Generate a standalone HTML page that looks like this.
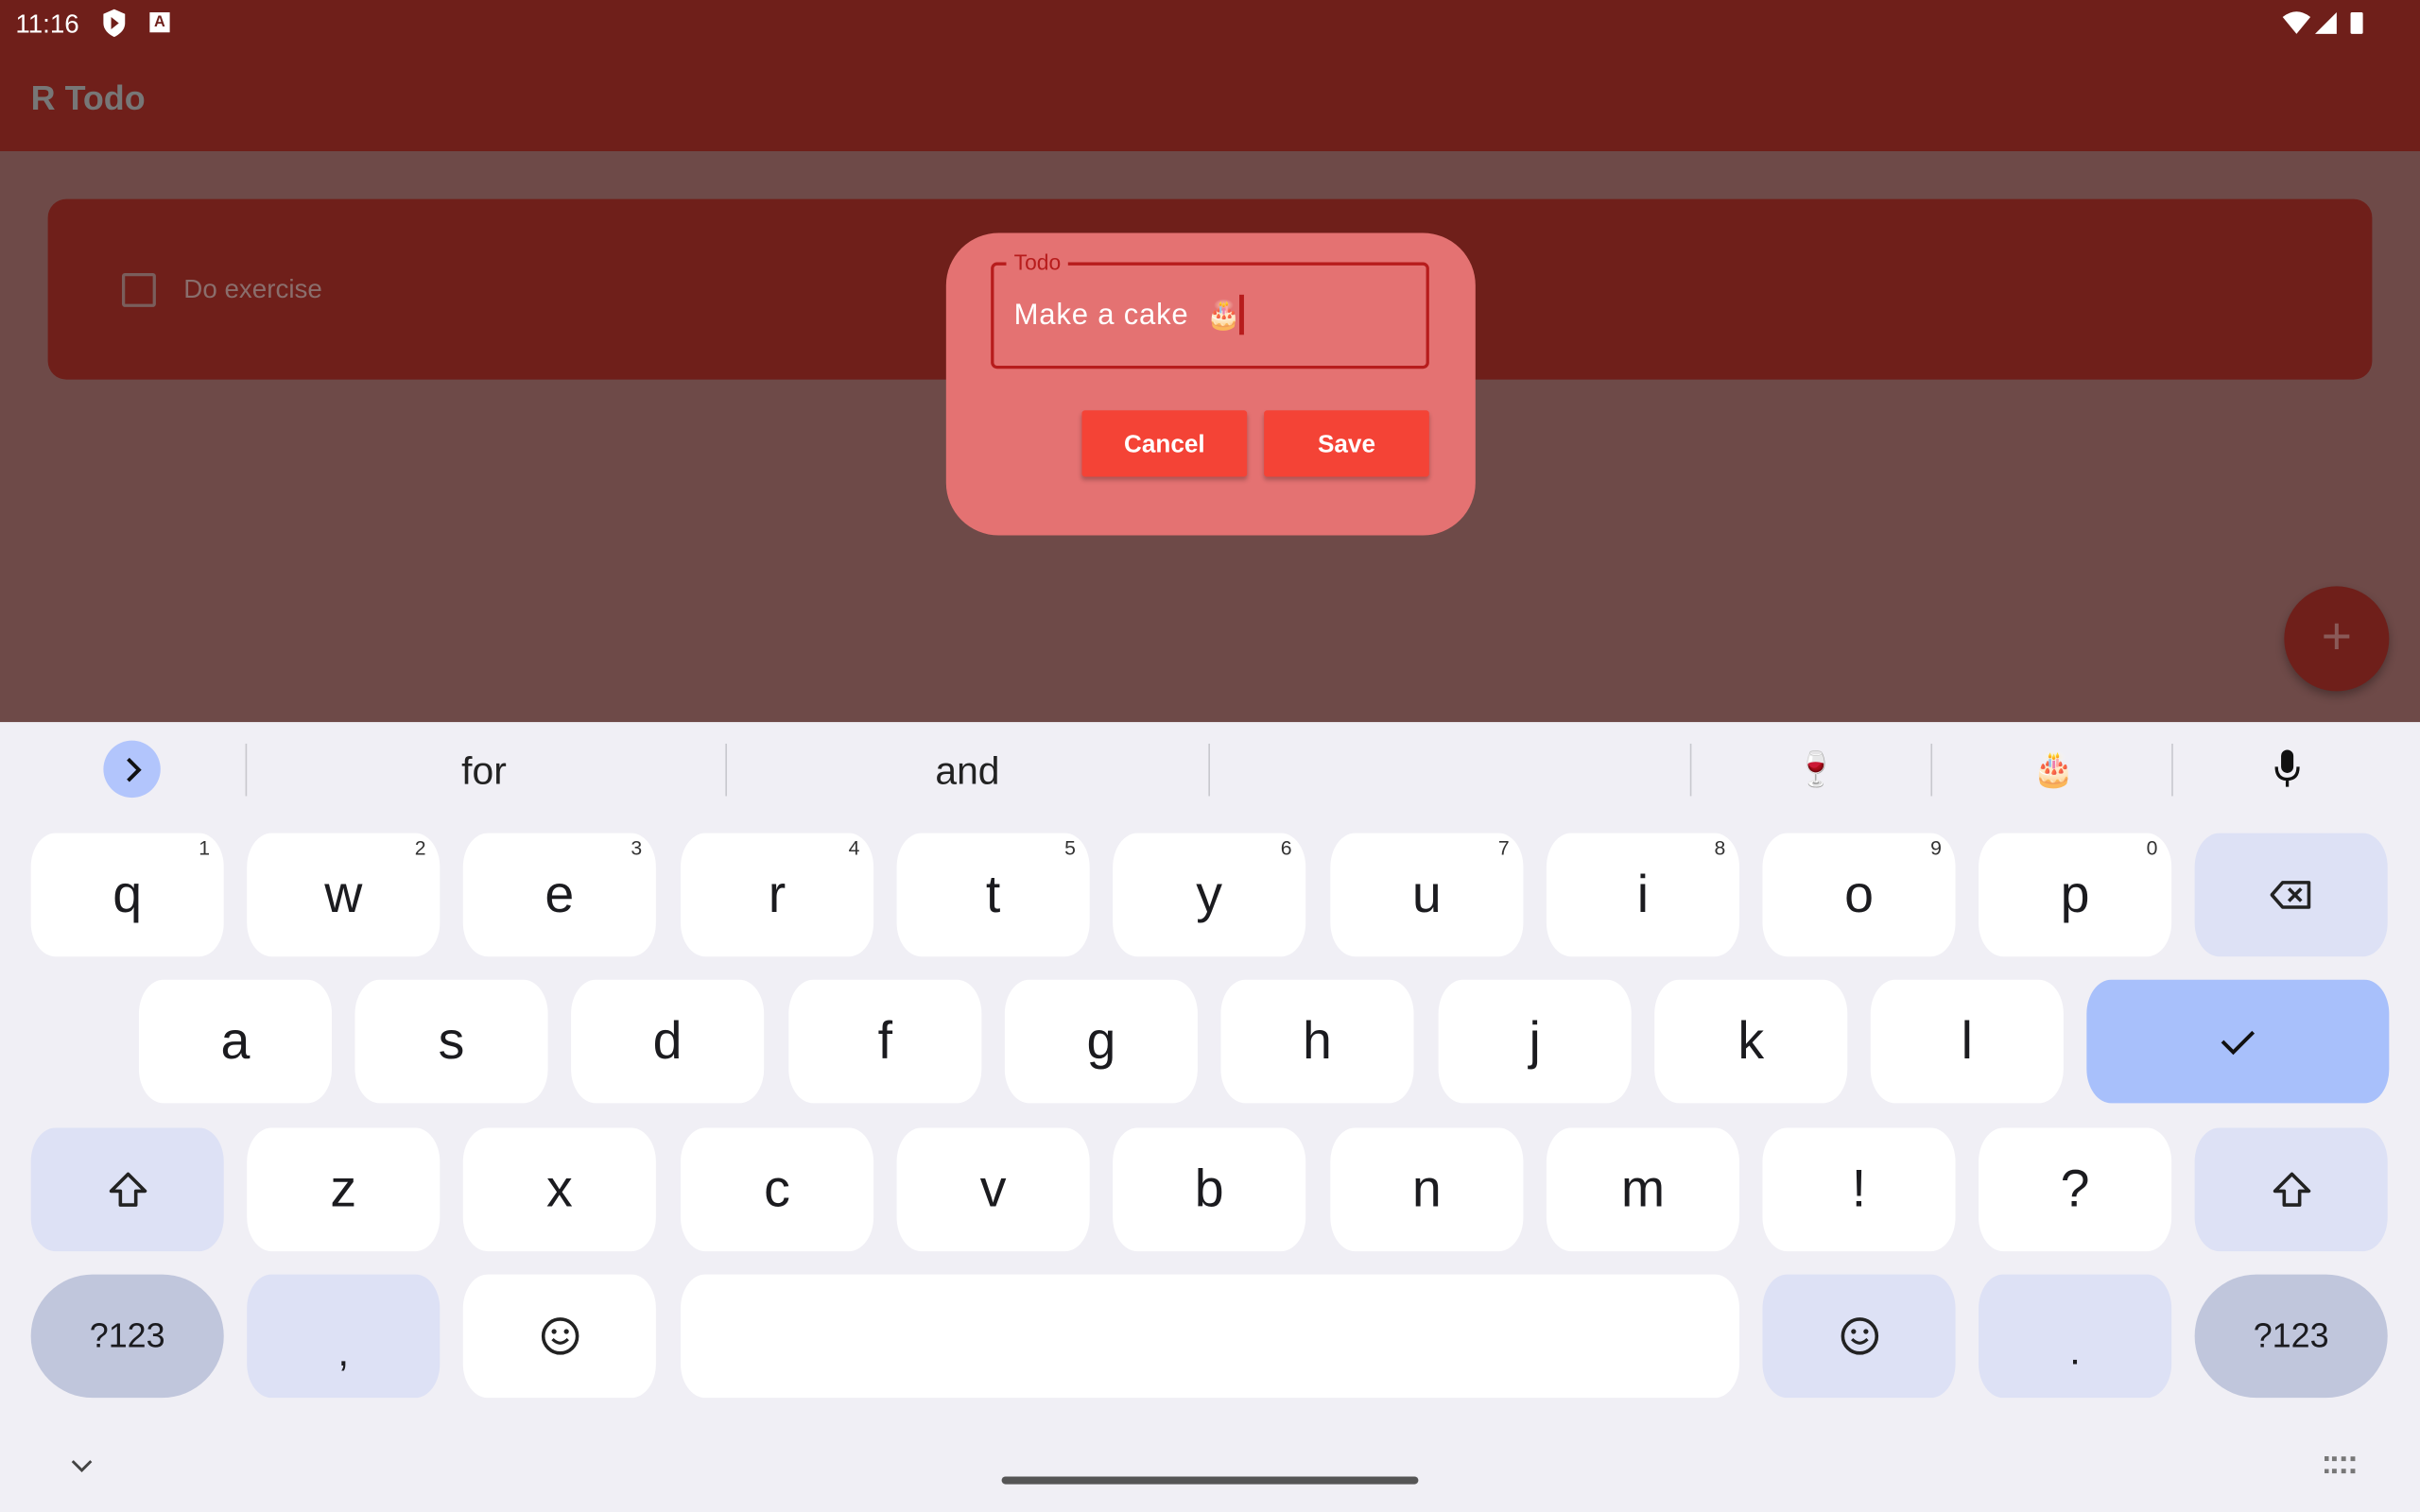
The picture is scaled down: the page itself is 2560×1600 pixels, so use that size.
<!DOCTYPE html>
<html><head><meta charset="utf-8"><style>
html,body{margin:0;padding:0;width:2560px;height:1600px;overflow:hidden;background:#f0eff5}
#w{position:absolute;left:0;top:0;width:1568px;height:980px;transform:scale(1.632653);transform-origin:0 0;font-family:"Liberation Sans","Noto Sans CJK SC",sans-serif}
.a{position:absolute}
.k{position:absolute;width:125px;height:80px;background:#fff;border-radius:16px/22px;display:flex;align-items:center;justify-content:center;font-size:34px;color:#1b1b1f}
.k sup{position:absolute;right:9px;top:2px;font-size:13px;color:#333}
.s{background:#dde1f5}
.sep{position:absolute;top:482px;width:1px;height:34px;background:#c8c8ce}
</style></head><body><div id="w">
<div class="a" style="left:0;top:0;width:1568px;height:98px;background:#6f1f1a"></div>
<div class="a" style="left:10px;top:6px;color:#fff;font-size:17px">11:16</div>
<svg class="a" style="left:65px;top:5px" width="18" height="20" viewBox="0 0 18 20"><path d="M9 1L16 4V10C16 14 13 17 9 19C5 17 2 14 2 10V4Z" fill="#fff"/><path d="M7 6L12 10L7 14Z" fill="#6f1f1a"/></svg>
<div class="a" style="left:97px;top:8px;width:13px;height:13px;background:#fff;color:#6f1f1a;font-size:10px;font-weight:bold;text-align:center;line-height:13px">A</div>
<svg class="a" style="left:1478px;top:6px" width="62" height="18" viewBox="0 0 62 18"><path d="M1 5Q10 -2 19 5L10 16Z" fill="#fff"/><path d="M22 16L36 2V16Z" fill="#fff"/><rect x="45" y="2" width="8" height="14" rx="1" fill="#fff"/></svg>
<div class="a" style="left:20px;top:51px;color:#777;font-size:22px;font-weight:bold">R Todo</div>
<div class="a" style="left:0;top:98px;width:1568px;height:370px;background:#6e4a48"></div>
<div class="a" style="left:31px;top:129px;width:1506px;height:117px;background:#6f1f1a;border-radius:12px"></div>
<div class="a" style="left:79px;top:177px;width:18px;height:18px;border:2px solid #7a5e5c;border-radius:2px"></div>
<div class="a" style="left:119px;top:178px;color:#8a6e6c;font-size:17px">Do exercise</div>
<div class="a" style="left:1480px;top:380px;width:68px;height:68px;border-radius:50%;background:#6f1f1a;box-shadow:0 3px 6px rgba(0,0,0,.3);color:#8a5a58;font-size:34px;text-align:center;line-height:66px">+</div>
<div class="a" style="left:613px;top:151px;width:343px;height:196px;background:#e47272;border-radius:34px"></div>
<div class="a" style="left:642px;top:170px;width:280px;height:65px;border:2px solid #b71c1c;border-radius:4px"></div>
<div class="a" style="left:652px;top:162px;padding:0 5px;background:#e47272;color:#b71c1c;font-size:14px">Todo</div>
<div class="a" style="left:657px;top:194px;color:#fff;font-size:19px;letter-spacing:.5px">Make a cake&nbsp;&nbsp;<span style="font-size:18px">🎂</span></div>
<div class="a" style="left:803px;top:191px;width:3px;height:26px;background:#b71c1c"></div>
<div class="a" style="left:701px;top:266px;width:107px;height:43px;background:#f44336;color:#fff;font-size:16px;font-weight:bold;text-align:center;line-height:45px;box-shadow:0 2px 3px rgba(0,0,0,.25);border-radius:2px">Cancel</div>
<div class="a" style="left:819px;top:266px;width:107px;height:43px;background:#f44336;color:#fff;font-size:16px;font-weight:bold;text-align:center;line-height:45px;box-shadow:0 2px 3px rgba(0,0,0,.25);border-radius:2px">Save</div>

<div class="a" style="left:67px;top:480px;width:37px;height:37px;border-radius:50%;background:#b2c5fc"></div>
<svg class="a" style="left:78px;top:490px" width="16" height="18" viewBox="0 0 16 18"><path d="M5 2L12 9L5 16" stroke="#111" stroke-width="2.4" fill="none"/></svg>
<div class="sep" style="left:159px"></div><div class="sep" style="left:470px"></div><div class="sep" style="left:783px"></div><div class="sep" style="left:1095px"></div><div class="sep" style="left:1251px"></div><div class="sep" style="left:1407px"></div>
<div class="a" style="left:299px;top:486px;font-size:25px;color:#222">for</div>
<div class="a" style="left:606px;top:486px;font-size:25px;color:#222">and</div>
<div class="a" style="left:1163px;top:486px;font-size:22px">🍷</div>
<div class="a" style="left:1317px;top:486px;font-size:22px">🎂</div>
<svg class="a" style="left:1472px;top:485px" width="20" height="28" viewBox="0 0 20 28"><rect x="6" y="1" width="8" height="15" rx="4" fill="#111"/><path d="M3 12Q3 20 10 20Q17 20 17 12M10 20V25" stroke="#111" stroke-width="2" fill="none"/></svg>

<div class="k" style="left:20px;top:540px">q<sup>1</sup></div>
<div class="k" style="left:160px;top:540px">w<sup>2</sup></div>
<div class="k" style="left:300px;top:540px">e<sup>3</sup></div>
<div class="k" style="left:441px;top:540px">r<sup>4</sup></div>
<div class="k" style="left:581px;top:540px">t<sup>5</sup></div>
<div class="k" style="left:721px;top:540px">y<sup>6</sup></div>
<div class="k" style="left:862px;top:540px">u<sup>7</sup></div>
<div class="k" style="left:1002px;top:540px">i<sup>8</sup></div>
<div class="k" style="left:1142px;top:540px">o<sup>9</sup></div>
<div class="k" style="left:1282px;top:540px">p<sup>0</sup></div>
<div class="k s" style="left:1422px;top:540px"><svg width="28" height="20" viewBox="0 0 28 20"><path d="M8 2H25V18H8L1 10Z" stroke="#222" stroke-width="2.2" fill="none" stroke-linejoin="round"/><path d="M12 6L20 14M20 6L12 14" stroke="#222" stroke-width="2.2"/></svg></div>

<div class="k" style="left:90px;top:635px">a</div>
<div class="k" style="left:230px;top:635px">s</div>
<div class="k" style="left:370px;top:635px">d</div>
<div class="k" style="left:511px;top:635px">f</div>
<div class="k" style="left:651px;top:635px">g</div>
<div class="k" style="left:791px;top:635px">h</div>
<div class="k" style="left:932px;top:635px">j</div>
<div class="k" style="left:1072px;top:635px">k</div>
<div class="k" style="left:1212px;top:635px">l</div>
<div class="k" style="left:1352px;top:635px;width:196px;background:#a8c0fb"><svg width="24" height="18" viewBox="0 0 24 18"><path d="M2 9L9 16L22 3" stroke="#111" stroke-width="2.4" fill="none"/></svg></div>

<div class="k s" style="left:20px;top:731px"><svg width="26" height="24" viewBox="0 0 26 24"><path d="M13 2L24 13H18V22H8V13H2Z" stroke="#222" stroke-width="2.2" fill="none" stroke-linejoin="round"/></svg></div>
<div class="k" style="left:160px;top:731px">z</div>
<div class="k" style="left:300px;top:731px">x</div>
<div class="k" style="left:441px;top:731px">c</div>
<div class="k" style="left:581px;top:731px">v</div>
<div class="k" style="left:721px;top:731px">b</div>
<div class="k" style="left:862px;top:731px">n</div>
<div class="k" style="left:1002px;top:731px">m</div>
<div class="k" style="left:1142px;top:731px">!</div>
<div class="k" style="left:1282px;top:731px">?</div>
<div class="k s" style="left:1422px;top:731px"><svg width="26" height="24" viewBox="0 0 26 24"><path d="M13 2L24 13H18V22H8V13H2Z" stroke="#222" stroke-width="2.2" fill="none" stroke-linejoin="round"/></svg></div>

<div class="k" style="left:20px;top:826px;background:#c0c6dc;border-radius:40px;font-size:22px">?123</div>
<div class="k s" style="left:160px;top:826px;font-size:26px;padding-top:20px;box-sizing:border-box">,</div>
<div class="k" style="left:300px;top:826px"><svg width="26" height="26" viewBox="0 0 26 26"><circle cx="13" cy="13" r="11" stroke="#222" stroke-width="2.2" fill="none"/><circle cx="9" cy="10" r="1.6" fill="#222"/><circle cx="17" cy="10" r="1.6" fill="#222"/><path d="M8 15Q13 20 18 15" stroke="#222" stroke-width="2" fill="none"/></svg></div>
<div class="k" style="left:441px;top:826px;width:686px"></div>
<div class="k s" style="left:1142px;top:826px"><svg width="26" height="26" viewBox="0 0 26 26"><circle cx="13" cy="13" r="11" stroke="#222" stroke-width="2.2" fill="none"/><circle cx="9" cy="10" r="1.6" fill="#222"/><circle cx="17" cy="10" r="1.6" fill="#222"/><path d="M8 15Q13 20 18 15" stroke="#222" stroke-width="2" fill="none"/></svg></div>
<div class="k s" style="left:1282px;top:826px;font-size:26px;padding-top:18px;box-sizing:border-box">.</div>
<div class="k" style="left:1422px;top:826px;background:#c0c6dc;border-radius:40px;font-size:22px">?123</div>

<svg class="a" style="left:45px;top:944px" width="16" height="12" viewBox="0 0 16 12"><path d="M2 3L8 9L14 3" stroke="#444" stroke-width="1.8" fill="none"/></svg>
<div class="a" style="left:649px;top:957px;width:270px;height:5px;border-radius:3px;background:#555"></div>
<div class="a" style="left:1506px;top:944px;width:20px;height:11px;border-top:3px dotted #777;border-bottom:3px dotted #777;box-sizing:border-box"></div>
</div></body></html>
